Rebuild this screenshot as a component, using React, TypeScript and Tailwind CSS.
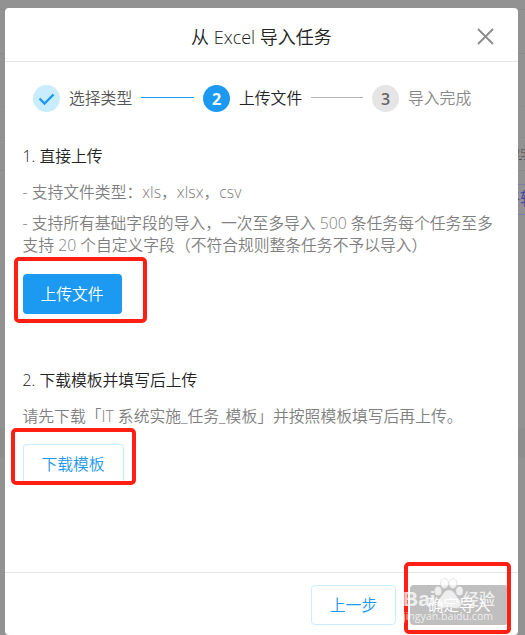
import clsx from "clsx";

const steps = [
  { label: "选择类型", state: "done" },
  { label: "上传文件", state: "active" },
  { label: "导入完成", state: "todo" },
];

function StepBadge({ index, state }: { index: number; state: string }) {
  return (
    <div
      className={clsx(
        "flex h-[27px] w-[27px] shrink-0 items-center justify-center rounded-full pt-px text-base leading-none",
        state === "done" && "bg-[#caecff] text-[#1c99f0]",
        state === "active" && "bg-[#1c99f0] font-bold text-white",
        state === "todo" && "bg-[#e5e5e5] font-semibold text-[#666]"
      )}
    >
      {state === "done" ? (
        <svg width="27" height="27" viewBox="0 0 27 27" fill="none" stroke="currentColor" strokeWidth="2.4">
          <path d="M6.5 12.5 L11.5 17.5 L20.5 8.5" />
        </svg>
      ) : (
        index
      )}
    </div>
  );
}

function Stepper() {
  return (
    <div className="mt-[23px] flex h-[27px] items-center pl-7">
      {steps.map((step, i) => (
        <div key={step.label} className="flex items-center">
          <StepBadge index={i + 1} state={step.state} />
          <span
            className={clsx(
              "ml-[9px] w-[63px] whitespace-nowrap",
              step.state === "done" && "text-[#555]",
              step.state === "active" && "text-[#222]",
              step.state === "todo" && "text-[#888]"
            )}
          >
            {step.label}
          </span>
          {i < steps.length - 1 && (
            <div className={clsx("mx-[9px] -mt-[2px] h-px", i === 0 ? "w-[53px] bg-[#1c99f0]" : "w-[52px] bg-[#b5b5b5]")} />
          )}
        </div>
      ))}
    </div>
  );
}

// Red frames drawn over the dialog
function Marks() {
  return (
    <>
      <div className="absolute left-[14px] top-[257px] h-[66px] w-[133px] rounded-[5px] border-4 border-[#ff2013]" />
      <div className="absolute left-[11px] top-[428px] h-[57px] w-[125px] rounded-[5px] border-4 border-[#ff2013]" />
      <div className="absolute left-[404px] top-[562px] h-[72px] w-[107px] rounded-[5px] border-4 border-[#ff2013]" />
    </>
  );
}

function Watermark() {
  return (
    <div className="absolute left-[403px] top-[577px] h-[46px] w-[100px] whitespace-nowrap text-white/75">
      <div className="absolute left-0 top-[11px] font-['Liberation_Sans',sans-serif] text-[21px] font-bold leading-[22px]">Bai</div>
      <svg className="absolute left-[31px] top-0" width="34" height="34" viewBox="0 0 34 34" fill="currentColor" stroke="#d0d0d0" strokeWidth="0.6">
        <ellipse cx="10.5" cy="6.5" rx="4" ry="5" />
        <ellipse cx="19" cy="6.5" rx="4" ry="5" />
        <ellipse cx="4" cy="14" rx="3.5" ry="4.5" />
        <ellipse cx="25.5" cy="14" rx="3.5" ry="4.5" />
        <path d="M15 13 C10 13 9 18 5 22 C1 27 4 32 9 31 C13 30 17 30 21 31 C27 32 29 27 25 22 C21 18 20 13 15 13Z" />
      </svg>
      <div className="absolute left-[60px] top-[11px] text-[16px] font-medium leading-[22px]">经验</div>
      <div className="absolute left-0 top-[32px] text-[10.6px] font-medium leading-[14px]">jingyan.baidu.com</div>
    </div>
  );
}

export default function App() {
  return (
    <div className="relative h-[635px] w-[525px] overflow-hidden bg-[#929292] font-['Open_Sans','Noto_Sans_CJK_SC',sans-serif] text-[15.8px] font-[350]">
      {/* Page behind the overlay */}
      <div className="absolute inset-0">
        <div className="mt-[9px] h-[45px] border-y border-[#8a8a8a]" />
        <div className="h-[53px] border-b border-[#8e8e8e]" />
        <div className="h-[31px] border-b border-[#8c8c8c]" />
        <div className="h-[33px] border-b border-[#8a8a8a]" />
        <div className="absolute left-[514px] top-[146px] border-b border-dashed border-[#555] text-[11px] leading-[13px] text-[#444]">25</div>
        <div className="absolute left-[503px] top-[184px] h-[31px] w-10 whitespace-nowrap border-y border-[#7d7da8] text-[17px] font-normal leading-7 text-[#4a4a9c]">终转</div>
        <div className="absolute left-0 top-[428px] h-[30px] w-full bg-[#8e8e8e]" />
      </div>

      <div className="relative ml-[5px] mt-2 flex h-[627px] w-[513px] flex-col rounded-[4px] bg-white">
        <div className="relative flex h-[54px] shrink-0 items-center justify-center border-b border-[#e3e3e3] text-[18px] text-[#222]">
          <span className="mt-[5px]">从 Excel 导入任务</span>
          <svg className="absolute right-[24px] top-[20px]" width="17" height="17" viewBox="0 0 17 17" stroke="#8c8c8c" strokeWidth="1.9">
            <path d="M1 1 L16 16 M16 1 L1 16" />
          </svg>
        </div>

        <Stepper />

        <div className="flex flex-col items-start whitespace-nowrap pl-[17.5px] text-[#808080]">
          <h3 className="mt-[33px] leading-[22px] text-[#222]">1. 直接上传</h3>
          <p className="mt-[14px] leading-[22px]">- 支持文件类型：xls，xlsx，csv</p>
          <p className="mt-[9px] leading-[22px] tracking-[-0.02px]">
            - 支持所有基础字段的导入，一次至多导入 500 条任务每个任务至多
            <br />
            支持 20 个自定义字段（不符合规则整条任务不予以导入）
          </p>
          <button className="mt-[18px] h-10 w-[99px] rounded-[4px] bg-[#1c99f0] pt-px text-white">上传文件</button>

          <h3 className="mt-[55px] leading-[22px] text-[#222]">2. 下载模板并填写后上传</h3>
          <p className="mt-[14px] leading-[22px]">请先下载「IT 系统实施_任务_模板」并按照模板填写后再上传。</p>
          <button className="mt-[17px] h-10 w-[101px] rounded-t-[4px] border border-b-0 border-[#caecff] text-[#1c99f0]">下载模板</button>
        </div>

        <div className="mt-auto flex h-[63px] shrink-0 items-start justify-end gap-[14px] border-t border-[#e3e3e3] pr-[10px] pt-3">
          <button className="h-10 w-[85px] rounded-[4px] border border-[#caecff] pt-px text-[#1c99f0]">上一步</button>
          <button className="h-10 w-[98px] rounded-[4px] bg-[#bfbfbf] pt-0.5 text-white">确定导入</button>
        </div>
      </div>

      <Marks />
      <Watermark />
    </div>
  );
}
